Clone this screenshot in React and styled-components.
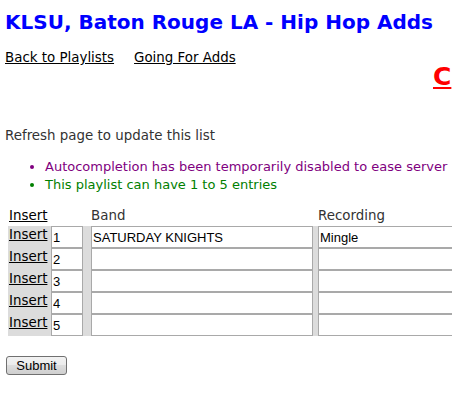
import styled, { createGlobalStyle } from "styled-components";

const GlobalStyle = createGlobalStyle`
html, body {
  margin: 0;
  padding: 0;
  overflow: hidden;
  background: #fff;
}
body {
  font-family: "DejaVu Sans", Verdana, sans-serif;
  font-size: 13.4px;
  color: #333;
}
`;

const entries = [
  { band: "SATURDAY KNIGHTS", recording: "Mingle" },
  { band: "", recording: "" },
  { band: "", recording: "" },
  { band: "", recording: "" },
  { band: "", recording: "" },
];

const App = () => {
  return (
    <>
      <GlobalStyle />
      <Page>
        <Title>KLSU, Baton Rouge LA - Hip Hop Adds</Title>
        <Nav>
          <NavLink href="#">Back to Playlists</NavLink>
          <NavLink href="#">Going For Adds</NavLink>
        </Nav>
        <Alert>
          <a href="#">C</a>
        </Alert>
        <Note>Refresh page to update this list</Note>
        <Notices>
          <Notice color="#800080">Autocompletion has been temporarily disabled to ease server</Notice>
          <Notice color="#008000">This playlist can have 1 to 5 entries</Notice>
        </Notices>

        <Playlist>
          <HeadRow>
            <Cell width={43} pad={1}>
              <InsertLink href="#">Insert</InsertLink>
            </Cell>
            <Cell width={32} />
            <Cell width={222} gap={8}>Band</Cell>
            <Cell width={222} gap={5}>Recording</Cell>
          </HeadRow>
          {entries.map((e, i) => (
            <Row key={i}>
              <Cell width={43} pad={1} top={1}>
                <InsertLink href="#">Insert</InsertLink>
              </Cell>
              <Field width={32} defaultValue={i + 1} />
              <Field width={222} gap={8} defaultValue={e.band} />
              <Field width={222} gap={5} defaultValue={e.recording} />
            </Row>
          ))}
        </Playlist>

        <SubmitButton type="button">Submit</SubmitButton>
      </Page>
    </>
  );
};

const Page = styled.div`
  padding: 10px 5px 0;
`;

const Title = styled.h1`
  margin: 0;
  font-size: 20px;
  line-height: 24px;
  font-weight: bold;
  color: #0000ff;
  white-space: nowrap;
`;

const Nav = styled.div`
  display: flex;
  gap: 20px;
  margin-top: 16px;
  line-height: 16px;
`;

const NavLink = styled.a`
  color: #000;
  text-decoration: underline;
`;

/* big red link pushed off to the right edge */
const Alert = styled.div`
  padding-left: 428px;
  white-space: nowrap;
  font-size: 25px;
  line-height: 22px;
  font-weight: bold;

  a {
    color: #ff0000;
    text-decoration: underline;
  }
`;

const Note = styled.p`
  margin: 40px 0 0;
  line-height: 16px;
`;

const Notices = styled.ul`
  margin: 14px 0 0;
  padding-left: 40px;
  white-space: nowrap;
  font-size: 13px;
`;

const Notice = styled.li`
  line-height: 18px;
  color: ${(p) => p.color};
`;

const Playlist = styled.div`
  margin-top: 14px;
  padding-left: 3px;
  display: flex;
  flex-direction: column;
`;

const HeadRow = styled.div`
  display: flex;
  line-height: 16px;
  margin-bottom: 2px;
`;

const Row = styled.div`
  display: flex;
  background: #dcdcdc;
  height: 22px;
  width: 600px;
`;

const Cell = styled.div`
  flex: none;
  width: ${(p) => p.width}px;
  margin-left: ${(p) => p.gap || 0}px;
  padding-left: ${(p) => p.pad || 0}px;
  padding-top: ${(p) => p.top || 0}px;
  box-sizing: border-box;
  line-height: 16px;
  white-space: nowrap;
`;

const InsertLink = styled.a`
  color: #000;
  text-decoration: underline;
`;

const Field = styled.input`
  flex: none;
  width: ${(p) => p.width}px;
  height: 22px;
  margin: 0 0 0 ${(p) => p.gap || 0}px;
  box-sizing: border-box;
  border: 1px solid #a9a9a9;
  padding: 0 1px;
  font-family: "Liberation Sans", Arial, sans-serif;
  font-size: 13px;
  color: #000;
  background: #fff;
  outline: none;
`;

const SubmitButton = styled.button`
  display: block;
  margin: 20px 0 0 1px;
  width: 61px;
  height: 19px;
  padding: 0;
  border: 1px solid #707070;
  border-radius: 3px;
  background: linear-gradient(#f2f2f2, #ebebeb 50%, #dddddd 50%, #cfcfcf);
  font-family: "Liberation Sans", Arial, sans-serif;
  font-size: 13px;
  color: #000;
`;

export default App;
